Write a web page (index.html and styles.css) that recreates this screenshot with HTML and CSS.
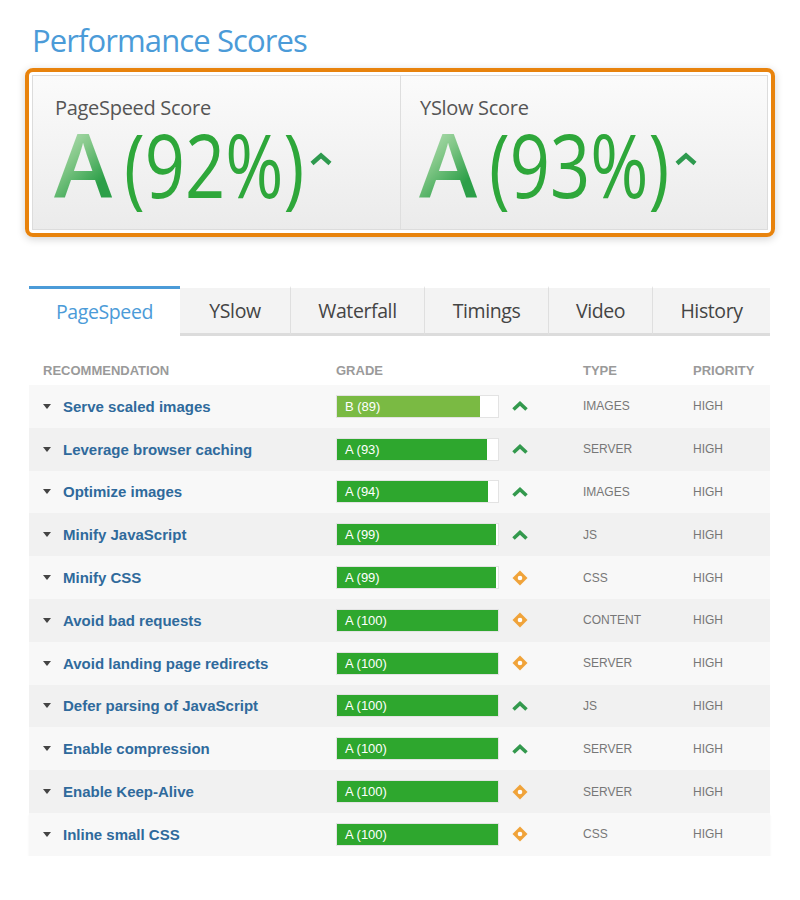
FILE: index.html
```html
<!DOCTYPE html>
<html>
<head>
<meta charset="utf-8">
<link rel="stylesheet" href="styles.css">
</head>
<body>
<div class="page">
  <h1 class="title">Performance Scores</h1>

  <div class="scorebox">
    <div class="panel">
      <div class="cell">
        <div class="label">PageSpeed Score</div>
        <div class="grade">
          <span class="letter">A</span><span class="pct">(92%)</span>
          <svg class="caret" width="24" height="14" viewBox="0 0 24 14"><polyline points="3,11.5 12,3.5 21,11.5" fill="none" stroke="#2e9a4e" stroke-width="4.5"/></svg>
        </div>
      </div>
      <div class="cell divider">
        <div class="label">YSlow Score</div>
        <div class="grade">
          <span class="letter">A</span><span class="pct">(93%)</span>
          <svg class="caret" width="24" height="14" viewBox="0 0 24 14"><polyline points="3,11.5 12,3.5 21,11.5" fill="none" stroke="#2e9a4e" stroke-width="4.5"/></svg>
        </div>
      </div>
    </div>
  </div>

  <div class="tabs">
    <div class="tab active">PageSpeed</div>
    <div class="tab">YSlow</div>
    <div class="tab">Waterfall</div>
    <div class="tab">Timings</div>
    <div class="tab">Video</div>
    <div class="tab">History</div>
  </div>

  <div class="table">
    <div class="row head">
      <div class="span2">RECOMMENDATION</div>
      <div>GRADE</div>
      <div></div>
      <div>TYPE</div>
      <div>PRIORITY</div>
    </div>

    <div class="row">
      <span class="tri"></span><span class="name">Serve scaled images</span>
      <div class="bar"><div class="fill b" style="width:89%">B (89)</div></div>
      <span class="ico"><svg width="16" height="10" viewBox="0 0 16 10"><polyline points="1.5,8.5 8,2.5 14.5,8.5" fill="none" stroke="#33994d" stroke-width="3.6"/></svg></span>
      <span class="type">IMAGES</span><span class="prio">HIGH</span>
    </div>
    <div class="row">
      <span class="tri"></span><span class="name">Leverage browser caching</span>
      <div class="bar"><div class="fill" style="width:93%">A (93)</div></div>
      <span class="ico"><svg width="16" height="10" viewBox="0 0 16 10"><polyline points="1.5,8.5 8,2.5 14.5,8.5" fill="none" stroke="#33994d" stroke-width="3.6"/></svg></span>
      <span class="type">SERVER</span><span class="prio">HIGH</span>
    </div>
    <div class="row">
      <span class="tri"></span><span class="name">Optimize images</span>
      <div class="bar"><div class="fill" style="width:94%">A (94)</div></div>
      <span class="ico"><svg width="16" height="10" viewBox="0 0 16 10"><polyline points="1.5,8.5 8,2.5 14.5,8.5" fill="none" stroke="#33994d" stroke-width="3.6"/></svg></span>
      <span class="type">IMAGES</span><span class="prio">HIGH</span>
    </div>
    <div class="row">
      <span class="tri"></span><span class="name">Minify JavaScript</span>
      <div class="bar"><div class="fill" style="width:99%">A (99)</div></div>
      <span class="ico"><svg width="16" height="10" viewBox="0 0 16 10"><polyline points="1.5,8.5 8,2.5 14.5,8.5" fill="none" stroke="#33994d" stroke-width="3.6"/></svg></span>
      <span class="type">JS</span><span class="prio">HIGH</span>
    </div>
    <div class="row">
      <span class="tri"></span><span class="name">Minify CSS</span>
      <div class="bar"><div class="fill" style="width:99%">A (99)</div></div>
      <span class="ico"><svg width="16" height="16" viewBox="0 0 16 16"><polygon points="8,0.5 15.5,8 8,15.5 0.5,8" fill="#f0a33a"/><circle cx="8" cy="8" r="2.3" fill="#fff"/></svg></span>
      <span class="type">CSS</span><span class="prio">HIGH</span>
    </div>
    <div class="row">
      <span class="tri"></span><span class="name">Avoid bad requests</span>
      <div class="bar"><div class="fill" style="width:100%">A (100)</div></div>
      <span class="ico"><svg width="16" height="16" viewBox="0 0 16 16"><polygon points="8,0.5 15.5,8 8,15.5 0.5,8" fill="#f0a33a"/><circle cx="8" cy="8" r="2.3" fill="#fff"/></svg></span>
      <span class="type">CONTENT</span><span class="prio">HIGH</span>
    </div>
    <div class="row">
      <span class="tri"></span><span class="name">Avoid landing page redirects</span>
      <div class="bar"><div class="fill" style="width:100%">A (100)</div></div>
      <span class="ico"><svg width="16" height="16" viewBox="0 0 16 16"><polygon points="8,0.5 15.5,8 8,15.5 0.5,8" fill="#f0a33a"/><circle cx="8" cy="8" r="2.3" fill="#fff"/></svg></span>
      <span class="type">SERVER</span><span class="prio">HIGH</span>
    </div>
    <div class="row">
      <span class="tri"></span><span class="name">Defer parsing of JavaScript</span>
      <div class="bar"><div class="fill" style="width:100%">A (100)</div></div>
      <span class="ico"><svg width="16" height="10" viewBox="0 0 16 10"><polyline points="1.5,8.5 8,2.5 14.5,8.5" fill="none" stroke="#33994d" stroke-width="3.6"/></svg></span>
      <span class="type">JS</span><span class="prio">HIGH</span>
    </div>
    <div class="row">
      <span class="tri"></span><span class="name">Enable compression</span>
      <div class="bar"><div class="fill" style="width:100%">A (100)</div></div>
      <span class="ico"><svg width="16" height="10" viewBox="0 0 16 10"><polyline points="1.5,8.5 8,2.5 14.5,8.5" fill="none" stroke="#33994d" stroke-width="3.6"/></svg></span>
      <span class="type">SERVER</span><span class="prio">HIGH</span>
    </div>
    <div class="row">
      <span class="tri"></span><span class="name">Enable Keep-Alive</span>
      <div class="bar"><div class="fill" style="width:100%">A (100)</div></div>
      <span class="ico"><svg width="16" height="16" viewBox="0 0 16 16"><polygon points="8,0.5 15.5,8 8,15.5 0.5,8" fill="#f0a33a"/><circle cx="8" cy="8" r="2.3" fill="#fff"/></svg></span>
      <span class="type">SERVER</span><span class="prio">HIGH</span>
    </div>
    <div class="row last">
      <span class="tri"></span><span class="name">Inline small CSS</span>
      <div class="bar"><div class="fill" style="width:100%">A (100)</div></div>
      <span class="ico"><svg width="16" height="16" viewBox="0 0 16 16"><polygon points="8,0.5 15.5,8 8,15.5 0.5,8" fill="#f0a33a"/><circle cx="8" cy="8" r="2.3" fill="#fff"/></svg></span>
      <span class="type">CSS</span><span class="prio">HIGH</span>
    </div>
  </div>
</div>
</body>
</html>
```

FILE: styles.css
```css
* { box-sizing: border-box; }
html, body { margin: 0; padding: 0; background: #fff; }
body { font-family: "Liberation Sans", Arial, sans-serif; }

.page { width: 800px; padding-top: 20px; }

.title {
  margin: 0 0 8px 32px;
  font-family: "Open Sans", sans-serif;
  font-weight: 400;
  font-size: 31px;
  line-height: 40px;
  letter-spacing: -0.9px;
  color: #4b9bd8;
}

.scorebox {
  margin: 0 25px;
  border: 4px solid #e8830d;
  border-radius: 8px;
  padding: 3px;
  box-shadow: 0 2px 8px rgba(0,0,0,0.18);
}
.panel {
  display: grid;
  grid-template-columns: 1fr 1fr;
  height: 155px;
  border: 1px solid #dcdcdc;
  background: linear-gradient(#fbfbfb, #ebebeb);
}
.cell { padding: 20px 0 0 22px; }
.cell.divider { border-left: 1px solid #dedede; padding-left: 19px; }
.label {
  font-family: "Open Sans", sans-serif;
  font-size: 20px;
  line-height: 24px;
  color: #555;
  letter-spacing: -0.3px;
}
.grade {
  display: flex;
  align-items: flex-start;
  margin-top: 9px;
  height: 70px;
  font-family: "Open Sans", sans-serif;
  font-size: 88px;
  line-height: 70px;
}
.letter {
  display: inline-block;
  font-weight: 600;
  background: linear-gradient(135deg, #c6e6c4 0%, #84c889 38%, #2c9f48 78%);
  -webkit-background-clip: text;
  background-clip: text;
  color: transparent;
  margin-left: -1px;
}
.pct {
  display: inline-block;
  color: #2ea73a;
  transform: scaleX(0.8);
  transform-origin: left center;
  margin-left: 12px;
  margin-right: -40px;
}
.caret { margin-top: 23px; }

.tabs {
  display: grid;
  grid-template-columns: 151px 110px 134px 124px 104px 118px;
  margin: 49px 0 0 29px;
  height: 50px;
  font-family: "Open Sans", sans-serif;
  font-size: 19.5px;
  letter-spacing: -0.4px;
  color: #444;
}
.tab {
  display: flex;
  align-items: center;
  justify-content: center;
  background: #f3f3f3;
  border-left: 1px solid #dfdfdf;
  border-top: 2px solid #fff;
  border-bottom: 3px solid #dcdcdc;
}
.tab.active {
  background: #fff;
  color: #4b9bd8;
  border-left: none;
  border-top: 3px solid #4b9bd8;
  border-bottom: 3px solid #fff;
}
.tab.active + .tab { border-left: none; }

.table { margin: 19px 0 0 29px; width: 741px; }
.row {
  display: grid;
  grid-template-columns: 20px 273px 163px 84px 110px 1fr;
  align-items: center;
  padding-left: 14px;
  height: 42.8px;
  background: #f8f8f8;
}
.row:nth-child(odd) { background: #f1f1f1; }
.row.head {
  height: 30px;
  background: #fff;
  font-size: 13px;
  font-weight: bold;
  color: #9a9a9a;
}
.span2 { grid-column: span 2; }
.row.last { box-shadow: 0 2px 2px rgba(0,0,0,0.06); }
.tri {
  width: 0; height: 0;
  border-left: 4px solid transparent;
  border-right: 4px solid transparent;
  border-top: 5px solid #444;
}
.name {
  font-size: 15px;
  font-weight: bold;
  color: #2f6a9c;
}
.bar {
  height: 23px;
  background: #fff;
  border: 1px solid #e3e3e3;
}
.fill {
  height: 100%;
  background: #2ea72e;
  color: #fff;
  font-size: 13px;
  line-height: 21px;
  padding-left: 8px;
  white-space: nowrap;
}
.fill.b { background: #7aba43; }
.ico { display: flex; align-items: center; padding-left: 13px; }
.type, .prio { font-size: 12px; color: #777; }
```
